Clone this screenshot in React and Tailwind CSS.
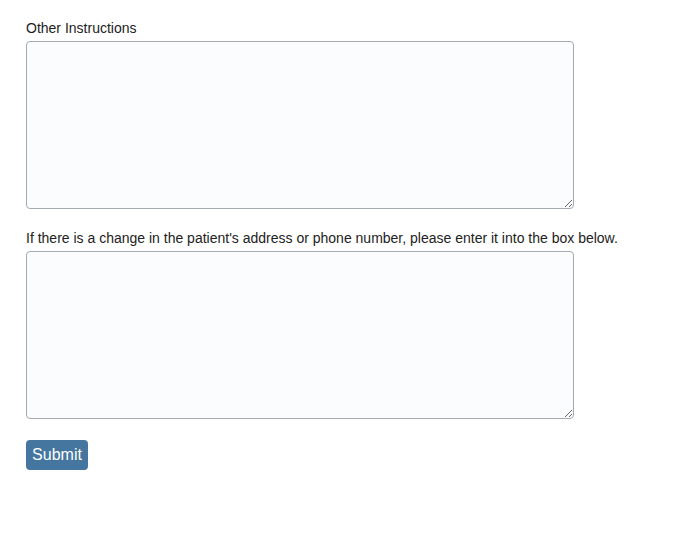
export default function App() {
	return (
		<div className="bg-white min-h-[542px] w-full px-[26px] pt-[18px] font-['Liberation_Sans',Arial,sans-serif] text-[14px] text-[#222]">
			<label className="block leading-[20px]" htmlFor="other">
				Other Instructions
			</label>
			<textarea
				id="other"
				className="block mt-[3px] w-[548px] h-[168px] bg-[#fafcfe] border border-[#a3aab2] rounded-[4px] resize-y"
			></textarea>
			<label className="block leading-[20px] mt-[19px]" htmlFor="address">
				If there is a change in the patient's address or phone number, please enter it into the box below.
			</label>
			<textarea
				id="address"
				className="block mt-[3px] w-[548px] h-[168px] bg-[#fafcfe] border border-[#a3aab2] rounded-[4px] resize-y"
			></textarea>
			<button className="block mt-[21px] h-[30px] w-[62px] bg-[#44769f] text-white text-[16px] rounded-[4px]">
				Submit
			</button>
		</div>
	);
}
